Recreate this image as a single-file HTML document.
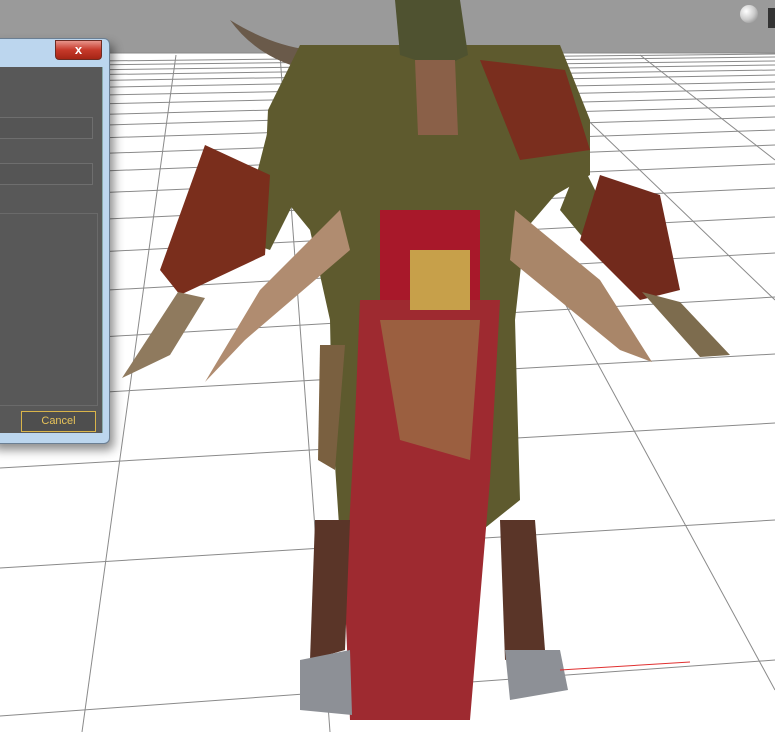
<!DOCTYPE html>
<html><head><meta charset="utf-8"><style>
html,body{margin:0;padding:0;width:775px;height:732px;overflow:hidden;background:#fff;font-family:"Liberation Sans",sans-serif}
.dlg{position:absolute;left:-10px;top:38px;width:118px;height:404px;background:#bcd6ee;border:1px solid #6b7f93;border-radius:0 6px 6px 0;box-shadow:4px 6px 10px rgba(0,0,0,.45)}
.close{position:absolute;left:64px;top:1px;width:45px;height:18px;background:linear-gradient(#e8948a,#c6392a 50%,#a52515);border:1px solid #6e2b22;border-radius:0 0 4px 4px;color:#fff;font-weight:bold;font-size:13px;text-align:center;line-height:17px}
.inner{position:absolute;left:0;top:28px;width:111px;height:366px;background:#585858;border-right:1px solid #8aa}
.f{position:absolute;left:0;width:100px;height:20px;border:1px solid #6e6e6e;background:#555}
.cancel{position:absolute;left:30px;top:344px;width:73px;height:19px;border:1px solid #d9b44a;color:#e7c35a;font-size:11px;text-align:center;line-height:19px;background:#4e4e4e}
</style></head><body>
<svg width="775" height="732" style="position:absolute;left:0;top:0">
<rect width="775" height="53" fill="#9a9a9a"/>
<line x1="0" y1="53" x2="775" y2="53" fill="none" stroke="#8a8a8a"/>
<g stroke="#8a8a8a" stroke-width="1">
<line x1="0" y1="62" x2="775" y2="54"/><line x1="0" y1="66" x2="775" y2="57"/><line x1="0" y1="71" x2="775" y2="61"/>
<line x1="0" y1="76" x2="775" y2="65"/><line x1="0" y1="82" x2="775" y2="70"/><line x1="0" y1="89" x2="775" y2="75"/>
<line x1="0" y1="97" x2="775" y2="82"/><line x1="0" y1="106" x2="775" y2="89"/><line x1="0" y1="117" x2="775" y2="97"/>
<line x1="0" y1="128" x2="775" y2="106"/><line x1="0" y1="141" x2="775" y2="117"/><line x1="0" y1="157" x2="775" y2="130"/>
<line x1="0" y1="175" x2="775" y2="145"/><line x1="0" y1="197" x2="775" y2="164"/><line x1="0" y1="224" x2="775" y2="188"/>
<line x1="0" y1="257" x2="775" y2="217"/><line x1="0" y1="296" x2="775" y2="253"/><line x1="0" y1="343" x2="775" y2="297"/>
<line x1="0" y1="398" x2="775" y2="354"/><line x1="0" y1="468" x2="775" y2="423"/><line x1="0" y1="568" x2="775" y2="520"/>
<line x1="0" y1="716" x2="775" y2="660"/>
<line x1="176" y1="55" x2="82" y2="732"/>
<line x1="280" y1="55" x2="330" y2="732"/>
<line x1="430" y1="55" x2="775" y2="690"/>
<line x1="520" y1="55" x2="775" y2="300"/>
<line x1="640" y1="55" x2="775" y2="160"/>
</g>
<line x1="262" y1="55" x2="530" y2="55" stroke="#fff" stroke-width="2"/>
<!-- figure -->
<path d="M230 20 Q270 45 310 50 L300 68 Q255 55 230 20Z" fill="#6a5a4a"/>
<path d="M300 45 L560 45 L590 120 L590 175 L555 195 L525 230 L515 320 L520 500 L470 540 L340 540 L332 420 L330 320 L310 230 L265 175 L268 110 Z" fill="#5e5a2e"/>
<path d="M395 0 L460 0 L468 55 L440 68 L400 55Z" fill="#4f5230"/>
<path d="M480 60 L565 70 L590 150 L520 160 Z" fill="#7a2e1e"/>
<path d="M268 130 L300 190 L270 250 L240 240 Z" fill="#5e5a2e"/>
<path d="M580 160 L600 200 L585 240 L560 210 Z" fill="#5e5a2e"/>
<path d="M205 145 L270 175 L265 255 L180 295 L160 270 Z" fill="#7a2e1c"/>
<path d="M600 175 L660 195 L680 290 L640 300 L580 240 Z" fill="#722a1c"/>
<path d="M178 292 L205 298 L170 355 L122 378 Z" fill="#8f7a5e"/>
<path d="M642 292 L680 302 L730 355 L700 357 Z" fill="#7d6c4e"/>
<path d="M340 210 L260 290 L205 382 L245 340 L350 250Z" fill="#b08c70"/>
<path d="M515 210 L600 280 L652 362 L620 350 L510 260Z" fill="#a98669"/>
<path d="M415 60 L455 60 L458 135 L418 135Z" fill="#8a6048"/>
<path d="M380 210 L480 210 L480 300 L380 300Z" fill="#a8182a"/>
<path d="M360 300 L500 300 L490 480 L480 600 L470 720 L350 720 L345 600 L355 420Z" fill="#9e2a30"/>
<path d="M380 320 L480 320 L470 460 L400 440Z" fill="#9a6d45" opacity=".8"/>
<path d="M410 250 L470 250 L470 310 L410 310Z" fill="#c7a04a"/>
<path d="M315 520 L350 520 L345 650 L310 660Z" fill="#5a3528"/>
<path d="M500 520 L535 520 L545 650 L505 660Z" fill="#5a3528"/>
<path d="M300 660 L350 650 L352 715 L300 710Z" fill="#8d9096"/>
<path d="M505 650 L560 650 L568 690 L510 700Z" fill="#8d9096"/>
<path d="M320 345 L345 345 L335 470 L318 460Z" fill="#7a6040"/>
<line x1="560" y1="670" x2="690" y2="662" stroke="#e03030" stroke-width="1"/>
</svg>
<div style="position:absolute;left:740px;top:5px;width:18px;height:18px;border-radius:50%;background:radial-gradient(circle at 35% 35%,#fff,#ccc 50%,#777)"></div>
<div style="position:absolute;left:768px;top:8px;width:7px;height:20px;background:#333"></div>
<div class="dlg">
<div class="close">x</div>
<div class="inner">
<div class="f" style="top:50px"></div>
<div class="f" style="top:96px"></div>
<div style="position:absolute;left:0;top:146px;width:105px;height:191px;border:1px solid #6a6a6a;background:#585858"></div>
<div class="cancel">Cancel</div>
</div></div>
</body></html>
